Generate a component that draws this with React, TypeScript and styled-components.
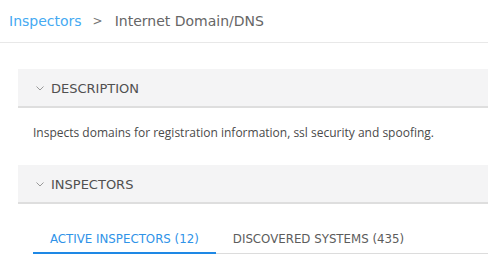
import React from "react";
import styled, { createGlobalStyle } from "styled-components";

const Global = createGlobalStyle`
  html, body { margin: 0; padding: 0; background: #fff; }
  body { font-family: "Open Sans", sans-serif; }
`;

const Page = styled.div`
  width: 488px;
  height: 267px;
  overflow: hidden;
  background: #fff;
`;

const Breadcrumb = styled.div`
  display: flex;
  align-items: center;
  height: 43px;
  padding: 0 0 1px 9px;
  border-bottom: 1px solid #e8e8e8;
  font-family: "DejaVu Sans", sans-serif;
  font-size: 14px;
  color: #666;
  box-sizing: border-box;
`;

const Crumb = styled.a`
  color: #45aaf2;
  text-decoration: none;
`;

const Sep = styled.span`
  margin: 0 12px 0 11px;
  font-size: 12px;
  color: #777;
`;

const Content = styled.div`
  padding: 26px 0 0 18px;
`;

const SectionHeader = styled.div`
  display: flex;
  align-items: center;
  gap: 7px;
  height: 37px;
  padding: 1px 0 0 18px;
  box-sizing: border-box;
  height: 39px;
  background: #f4f4f5;
  border-bottom: 2px solid #dedede;
  font-family: "DejaVu Sans", sans-serif;
  font-size: 13px;
  color: #505050;
`;

const Chevron = () => (
  <svg width="8" height="5" viewBox="0 0 8 5">
    <path d="M0.5 0.5 L4 4 L7.5 0.5" fill="none" stroke="#999" strokeWidth="1" />
  </svg>
);

const Body = styled.p`
  margin: 0;
  padding: 17px 0 24px 15px;
  font-family: "Open Sans", sans-serif;
  font-size: 12px;
  color: #4a4a4a;
  line-height: 16px;
`;

const Tabs = styled.div`
  display: flex;
  margin: 26px 0 0 15px;
  border-bottom: 1px solid #dcdcdc;
`;

const Tab = styled.div<{ $active?: boolean }>`
  padding: 1px 17px 5px;
  line-height: 16px;
  font-family: "DejaVu Sans", sans-serif;
  font-size: 11.8px;
  color: ${(p) => (p.$active ? "#2f93e8" : "#5c5c5c")};
  border-bottom: 2px solid ${(p) => (p.$active ? "#1e88e5" : "transparent")};
  margin-bottom: -1px;
`;

export default function App() {
  return (
    <Page>
      <Global />
      <Breadcrumb>
        <Crumb>Inspectors</Crumb>
        <Sep>&gt;</Sep>
        <span>Internet Domain/DNS</span>
      </Breadcrumb>
      <Content>
        <SectionHeader>
          <Chevron />
          DESCRIPTION
        </SectionHeader>
        <Body>Inspects domains for registration information, ssl security and spoofing.</Body>
        <SectionHeader>
          <Chevron />
          INSPECTORS
        </SectionHeader>
        <Tabs>
          <Tab $active>ACTIVE INSPECTORS (12)</Tab>
          <Tab>DISCOVERED SYSTEMS (435)</Tab>
        </Tabs>
      </Content>
    </Page>
  );
}
